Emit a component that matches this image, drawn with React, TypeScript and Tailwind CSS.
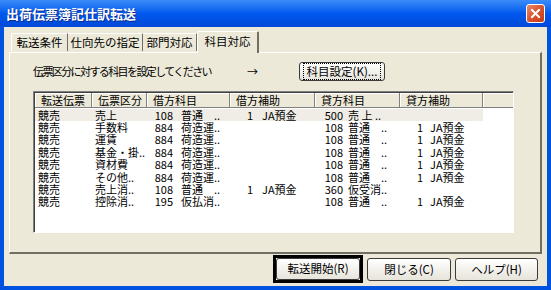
import React from 'react'

const FONT = '"Noto Sans CJK JP", "Noto Sans", sans-serif'

type Acct = [string, string] | null

const rows: [string, string, Acct, Acct, Acct, Acct][] = [
  ['競売', '売上', ['108', '普通　..'], ['1', 'JA預金'], ['500', '売 上 ..'], null],
  ['競売', '手数料', ['884', '荷造運..'], null, ['108', '普通　..'], ['1', 'JA預金']],
  ['競売', '運賃', ['884', '荷造運..'], null, ['108', '普通　..'], ['1', 'JA預金']],
  ['競売', '基金・掛..', ['884', '荷造運..'], null, ['108', '普通　..'], ['1', 'JA預金']],
  ['競売', '資材費', ['884', '荷造運..'], null, ['108', '普通　..'], ['1', 'JA預金']],
  ['競売', 'その他..', ['884', '荷造運..'], null, ['108', '普通　..'], ['1', 'JA預金']],
  ['競売', '売上消..', ['108', '普通　..'], ['1', 'JA預金'], ['360', '仮受消..'], null],
  ['競売', '控除消..', ['195', '仮払消..'], null, ['108', '普通　..'], ['1', 'JA預金']],
]

const headers: [string, string][] = [
  ['転送伝票', 'w-[57px]'],
  ['伝票区分', 'w-[55px]'],
  ['借方科目', 'w-[83px]'],
  ['借方補助', 'w-[85px]'],
  ['貸方科目', 'w-[85px]'],
  ['貸方補助', 'w-[83px]'],
]

function XpButton({ label, className = '', focus = false }: { label: string; className?: string; focus?: boolean }) {
  return (
    <button
      type="button"
      className={
        'flex items-center justify-center rounded-[3px] border border-[#3c3c3c] bg-gradient-to-b from-white to-[#e6e4da] text-[11.5px] leading-none text-black ' +
        className
      }
    >
      <span className={focus ? 'border border-dotted border-black px-[3px] py-[2px]' : ''}>{label}</span>
    </button>
  )
}

function Account({ v, numW, gap }: { v: Acct; numW: string; gap: string }) {
  if (!v) return null
  return (
    <div className="flex items-center">
      <span className={numW + ' text-right'}>{v[0]}</span>
      <span className={gap + ' whitespace-pre'}>{v[1]}</span>
    </div>
  )
}

export default function App() {
  return (
    <div className="flex h-[290px] w-[551px] flex-col bg-[#0053e1]" style={{ fontFamily: FONT }}>
      {/* title bar */}
      <div className="flex h-[27px] shrink-0 items-center justify-between bg-gradient-to-b from-[#3a8cf8] via-[#0058ee] to-[#0048d8] pl-[6px] pr-[6px]">
        <span className="text-[13px] font-bold leading-none text-white [text-shadow:1px_1px_0_#0a2a8a]">
          出荷伝票簿記仕訳転送
        </span>
        <div className="flex h-[19px] w-[19px] items-center justify-center rounded-[3px] border border-white bg-gradient-to-br from-[#e98a6a] via-[#d9532c] to-[#c13c15]">
          <svg width="11" height="11" viewBox="0 0 11 11">
            <path d="M2 2 L9 9 M9 2 L2 9" stroke="white" strokeWidth="2" strokeLinecap="square" />
          </svg>
        </div>
      </div>

      {/* client area */}
      <div className="mx-[4px] mb-[4px] flex flex-1 flex-col bg-[#ece9d8] px-[5px] pt-[4px]">
        {/* tabs */}
        <div className="relative z-10 flex h-[21px] items-end pl-[2px] text-[11.5px] leading-none text-black">
          <div className="mb-[1px] flex h-[18px] w-[57px] items-center justify-center rounded-tl-[2px] border-l border-t border-white border-r border-r-[#716f64]">
            転送条件
          </div>
          <div className="mb-[1px] flex h-[18px] w-[75px] items-center justify-center border-t border-white border-r border-r-[#716f64]">
            仕向先の指定
          </div>
          <div className="mb-[1px] flex h-[18px] w-[54px] items-center justify-center border-t border-white border-r border-r-[#716f64]">
            部門対応
          </div>
          <div className="-mb-[1px] flex h-[22px] w-[62px] items-start justify-center rounded-t-[2px] border-l border-t border-white border-r-2 border-r-[#716f64] bg-[#ece9d8] pt-[4px]">
            科目対応
          </div>
        </div>

        {/* tab panel */}
        <div className="flex h-[202px] flex-col border-l border-t border-white border-r-2 border-b-2 border-r-[#716f64] border-b-[#716f64] pl-[23px] pt-[9px]">
          <div className="flex h-[19px] items-center text-[11px] leading-none text-black">
            <span className="w-[214px] tracking-[-1.6px]">伝票区分に対する科目を設定してください</span>
            <span className="w-[52px]">→</span>
            <XpButton label="科目設定(K)..." className="h-[19px] w-[86px]" focus />
          </div>

          {/* list view */}
          <div className="mt-[10px] h-[142px] w-[481px] border-l border-t border-[#808080] border-r border-b border-r-white border-b-white">
            <div className="flex h-full flex-col border-l border-t border-[#404040] bg-white">
              <div className="flex h-[15px] shrink-0 bg-[#ece9d8] text-[11px] leading-none text-black">
                {headers.map(([h, w]) => (
                  <div
                    key={h}
                    className={w + ' flex items-center border-r border-b border-[#808080] pl-[6px] shadow-[inset_1px_1px_0_white]'}
                  >
                    {h}
                  </div>
                ))}
                <div className="flex-1 border-b border-[#808080] shadow-[inset_1px_1px_0_white]" />
              </div>
              <div className="pt-[1px] text-[11px] leading-none text-black">
                {rows.map((r, i) => (
                  <div key={i} className="flex h-[12.4px] items-center">
                    <div className={'flex h-full items-center ' + (i === 0 ? 'bg-[#efede5]' : '')}>
                      <div className="w-[57px] pl-[3px]">{r[0]}</div>
                      <div className="w-[55px] pl-[3px]">{r[1]}</div>
                      <div className="w-[83px]">
                        <Account v={r[2]} numW="w-[26px]" gap="pl-[8px]" />
                      </div>
                      <div className="w-[85px]">
                        <Account v={r[3]} numW="w-[23px]" gap="pl-[9px]" />
                      </div>
                      <div className="w-[85px]">
                        <Account v={r[4]} numW="w-[28px]" gap="pl-[5px]" />
                      </div>
                      <div className="w-[83px]">
                        <Account v={r[5]} numW="w-[23px]" gap="pl-[7px]" />
                      </div>
                    </div>
                  </div>
                ))}
              </div>
            </div>
          </div>
        </div>

        {/* buttons */}
        <div className="mt-[1px] flex items-start justify-end gap-[4px] pr-[4px] text-black">
          <div className="border-[3px] border-black">
            <XpButton label="転送開始(R)" className="h-[22px] w-[84px]" />
          </div>
          <XpButton label="閉じる(C)" className="mt-[3px] h-[23px] w-[84px]" />
          <XpButton label="ヘルプ(H)" className="mt-[3px] h-[23px] w-[83px]" />
        </div>
      </div>
    </div>
  )
}
